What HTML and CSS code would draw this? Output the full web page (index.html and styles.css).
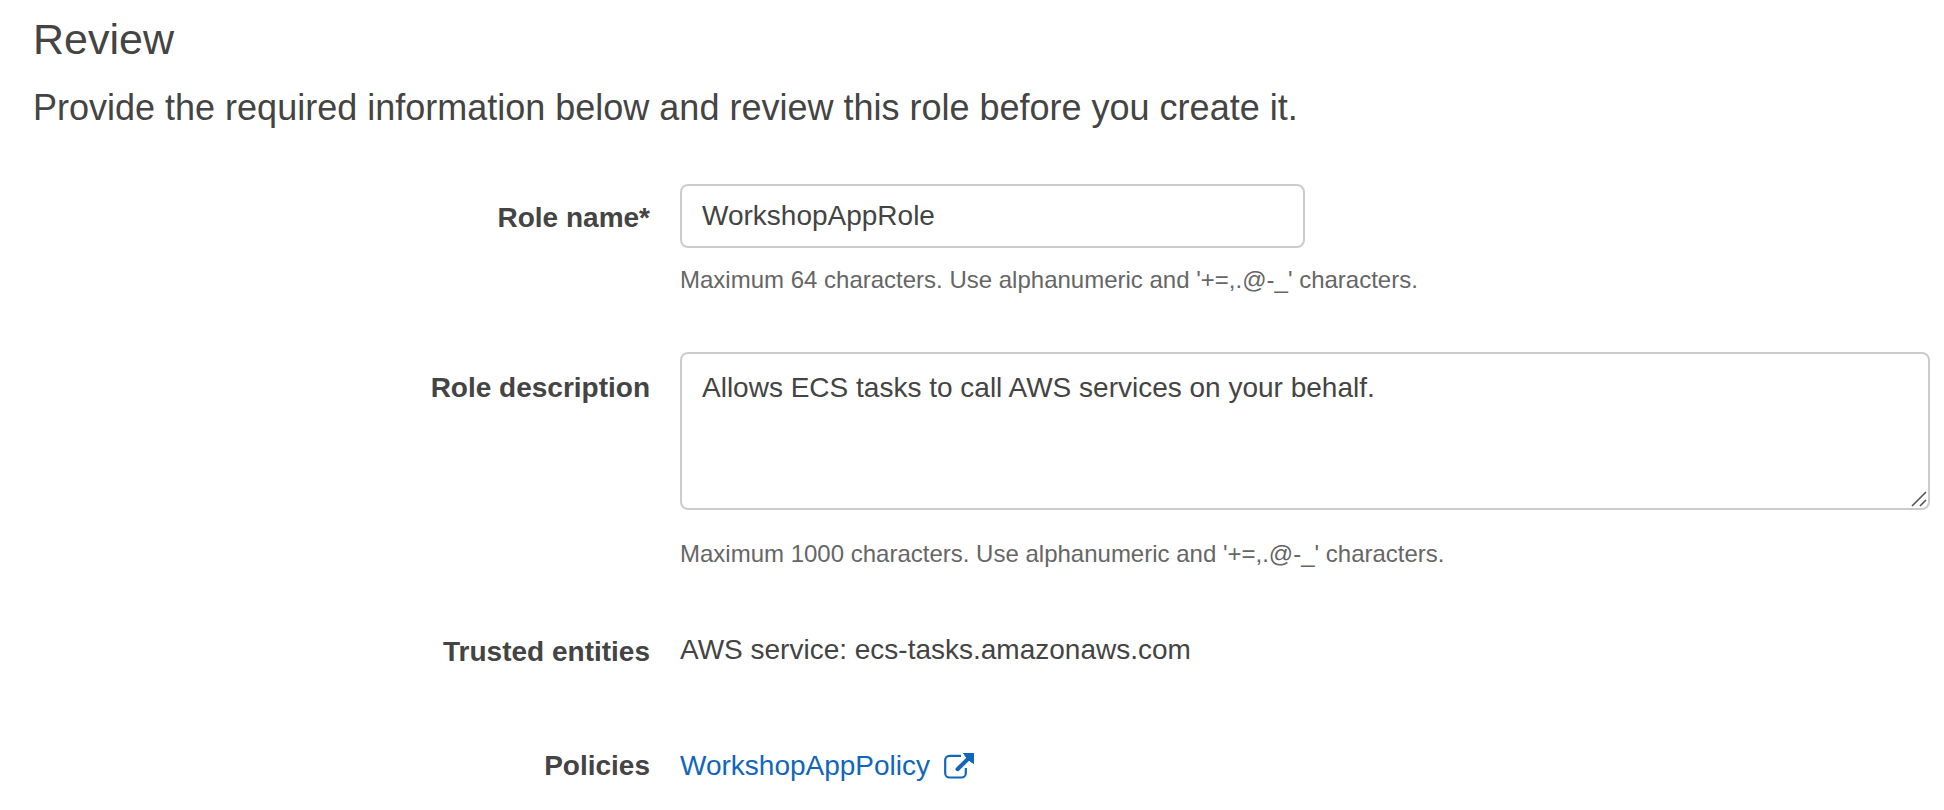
FILE: index.html
```html
<!DOCTYPE html>
<html lang="en">
<head>
<meta charset="utf-8">
<title>Review</title>
<link rel="stylesheet" href="styles.css">
</head>
<body>
<main class="review">
  <h1 class="title">Review</h1>
  <p class="intro">Provide the required information below and review this role before you create it.</p>
  <form class="form">
    <div class="row row-name">
      <label class="label label-name" for="role-name">Role name*</label>
      <div class="value">
        <input class="control name" id="role-name" type="text" value="WorkshopAppRole" aria-describedby="name-hint">
        <p class="hint" id="name-hint">Maximum 64 characters. Use alphanumeric and '+=,.@-_' characters.</p>
      </div>
    </div>
    <div class="row row-description">
      <label class="label label-description" for="role-description">Role description</label>
      <div class="value">
        <div class="resizable">
          <textarea class="control description" id="role-description" aria-describedby="description-hint">Allows ECS tasks to call AWS services on your behalf.</textarea>
          <svg class="grip" viewBox="0 0 16 16" aria-hidden="true"><path d="M1 15 15 1M9 15l6-6"/></svg>
        </div>
        <p class="hint hint-description" id="description-hint">Maximum 1000 characters. Use alphanumeric and '+=,.@-_' characters.</p>
      </div>
    </div>
    <div class="row row-entities">
      <span class="label label-entities">Trusted entities</span>
      <span class="value">AWS service: ecs-tasks.amazonaws.com</span>
    </div>
    <div class="row">
      <span class="label">Policies</span>
      <div class="value">
        <a class="policy" href="#policy">WorkshopAppPolicy
          <svg class="external" viewBox="0 0 30 26" aria-hidden="true"><path d="M17 2.8H5.5A4.3 4.3 0 0 0 1.2 7.1v13.1a4.3 4.3 0 0 0 4.3 4.3h12a4.3 4.3 0 0 0 4.3-4.3V15"/><path class="arrow" d="M13.5 16.2 25 5"/><path class="head" d="M19.5 0H29.5v10.5L26 8 21.8 3.8z"/></svg>
        </a>
      </div>
    </div>
  </form>
</main>
</body>
</html>
```
FILE: styles.css
```css
* { box-sizing: border-box; }
body { margin: 0; background: #fff; color: #444; font: 28px/36px "Liberation Sans", Arial, sans-serif; }
.review { padding: 13px 14px 24px 33px; }
.title { margin: 0; font-size: 43px; line-height: 52px; font-weight: 400; }
.intro { margin: 19px 0 0; font-size: 36px; line-height: 48px; }
.form { margin-top: 52px; }
.row { display: grid; grid-template-columns: 617px minmax(0, 1fr); column-gap: 30px; }
.row-name { margin-bottom: 56px; }
.row-description { margin-bottom: 62px; }
.row-entities { margin-bottom: 78px; }
.label { font-weight: 700; text-align: right; }
.label-name { padding-top: 16px; }
.label-description { padding-top: 18px; }
.label-entities { padding-top: 2px; }
.control { display: block; width: 100%; margin: 0; border: 2px solid #ccc; border-radius: 8px; padding: 12px 20px; background: #fff; color: #444; font: inherit; outline: none; }
.name { width: 50%; height: 64px; }
.description { height: 158px; padding-top: 16px; resize: none; }
.resizable { position: relative; }
.grip { position: absolute; right: 3px; bottom: 3px; width: 16px; height: 16px; fill: none; stroke: #555; stroke-width: 1.6; }
.hint { margin: 16px 0 0; color: #666; font-size: 24px; line-height: 32px; }
.hint-description { margin-top: 28px; }
.policy { display: inline-flex; align-items: center; gap: 14px; color: #1166bb; text-decoration: none; }
.external { width: 30px; height: 26px; fill: none; stroke: currentColor; stroke-width: 2.2; }
.arrow { stroke-width: 4; stroke-linecap: round; }
.head { fill: currentColor; stroke: currentColor; stroke-width: 1; stroke-linejoin: round; }
```
